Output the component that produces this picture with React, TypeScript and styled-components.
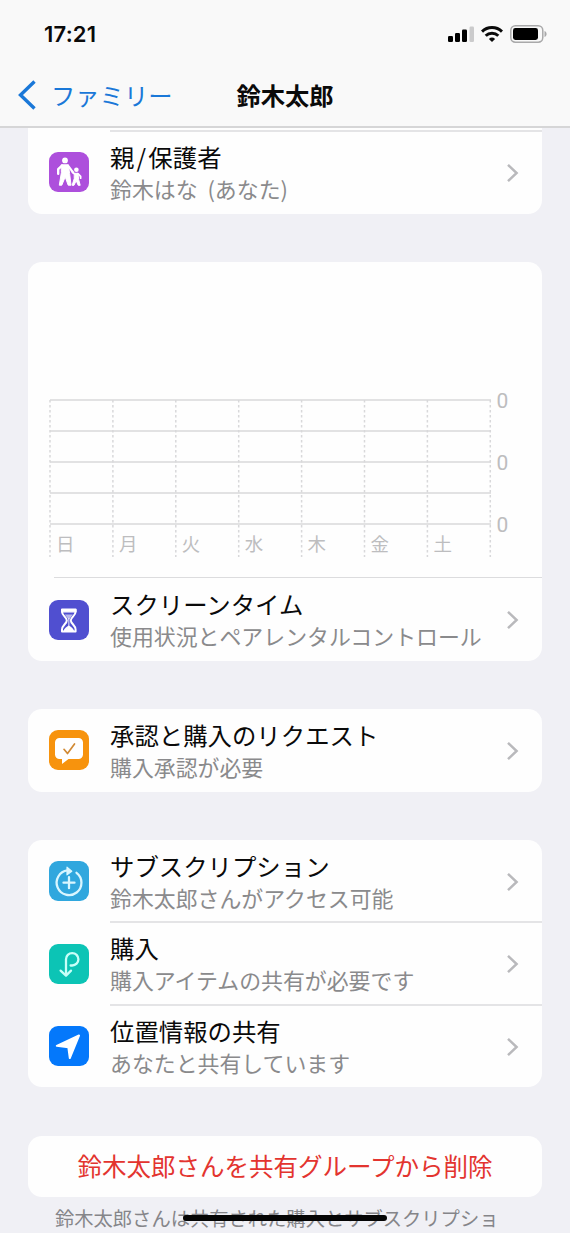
import React from 'react';
import styled, { createGlobalStyle } from 'styled-components';

const GlobalStyle = createGlobalStyle`
  * { box-sizing: border-box; }
  body {
    margin: 0;
    background: #f0f0f5;
    font-family: "Noto Sans CJK JP", sans-serif;
    color: #0a0a0a;
  }
`;

const Screen = styled.div`
  position: relative;
  width: 570px;
  height: 1233px;
  overflow: hidden;
  display: flex;
  flex-direction: column;
  background: #f0f0f5;
`;

const Header = styled.header`
  flex: none;
  height: 128px;
  background: #f9f9f9;
  border-bottom: 2px solid #d6d6d7;
`;

const StatusBar = styled.div`
  height: 66px;
  padding: 2px 23px 0 44px;
  display: flex;
  align-items: center;
  justify-content: space-between;
`;

const Clock = styled.span`
  font: 600 22px/30px Inter, sans-serif;
  letter-spacing: 0.2px;
`;

const StatusIcons = styled.div`
  display: flex;
  align-items: center;
  gap: 7px;
  svg { display: block; }
`;

const NavBar = styled.nav`
  height: 58px;
  display: grid;
  grid-template-columns: 1fr auto 1fr;
  align-items: center;
  padding: 0 18px;
`;

const BackLink = styled.div`
  display: flex;
  align-items: center;
  gap: 15px;
  color: #1a78d8;
  font-size: 24.3px;
  line-height: 36px;
`;

const NavTitle = styled.h1`
  margin: 0;
  font-size: 24.3px;
  line-height: 36px;
  font-weight: 700;
`;

const Content = styled.main`
  padding: 0 28px;
  display: flex;
  flex-direction: column;
`;

const Card = styled.section<{ $continued?: boolean }>`
  background: #fefefe;
  border-radius: ${(p) => (p.$continued ? '0 0 14px 14px' : '14px')};
  padding-top: ${(p) => (p.$continued ? '3px' : '0')};
  margin-bottom: 48.3px;
  overflow: hidden;
`;

const Row = styled.div`
  display: flex;
  align-items: center;
  height: 82.5px;
  padding-left: 21px;
`;

const IconTile = styled.div<{ $color: string }>`
  flex: none;
  width: 40px;
  height: 40px;
  border-radius: 9px;
  background: ${(p) => p.$color};
  svg { display: block; }
`;

const RowBody = styled.div<{ $divided?: boolean }>`
  flex: 1;
  height: 83.5px;
  margin: -1px 0 0 21px;
  padding-right: 23px;
  display: flex;
  align-items: center;
  justify-content: space-between;
  border-top: 2px solid ${(p) => (p.$divided ? '#e4e4e6' : 'transparent')};
`;

const Labels = styled.div`
  white-space: nowrap;
`;

const Title = styled.div`
  font-size: 24.4px;
  line-height: 32px;
`;

const Slash = styled.span`
  margin: 0 2.2px;
`;

const Subtitle = styled.div`
  font-size: 21.9px;
  line-height: 32px;
  color: #8a8a8c;
  word-spacing: 5px;
`;

const ChartArea = styled.div`
  height: 315px;
  padding-top: 125px;
  svg { display: block; }
`;

const Divider = styled.div`
  height: 1.5px;
  margin-left: 26px;
  background: #dcdcde;
`;

const DeleteButton = styled.button`
  width: 100%;
  height: 61px;
  border: 0;
  border-radius: 14px;
  padding: 0;
  background: #fefefe;
  color: #e3342f;
  font: 400 24.5px/36px "Noto Sans CJK JP", sans-serif;
  white-space: nowrap;
`;

const Footnote = styled.p`
  margin: 7px 0 0 27px;
  font-size: 19.3px;
  line-height: 28px;
  color: #858589;
  white-space: nowrap;
`;

const HomeIndicator = styled.div`
  position: absolute;
  left: 183px;
  bottom: 12px;
  width: 204px;
  height: 6px;
  border-radius: 3px;
  background: #050505;
`;

const Chevron = () => (
  <svg width="13" height="20" viewBox="0 0 13 20" fill="none">
    <path d="M2 1.8 10.6 10 2 18.2" stroke="#b9b9bc" strokeWidth="2.5" />
  </svg>
);

const Signal = () => (
  <svg width="26" height="16" viewBox="0 0 26 16">
    <rect x="0" y="10" width="5" height="6" rx="1.2" />
    <rect x="7" y="7" width="5" height="9" rx="1.2" />
    <rect x="14" y="3.5" width="5" height="12.5" rx="1.2" />
    <rect x="21.5" y="0.500" width="4.500" height="15.500" rx="1.2" fill="#cbcbcc" />
  </svg>
);

const Wifi = () => (
  <svg width="22" height="16" viewBox="0 0 22 16" fill="none" stroke="#0a0a0a" strokeWidth="3">
    <path d="M1 5.6a14.3 14.3 0 0 1 20 0" />
    <path d="M4.7 9.8a9 9 0 0 1 12.6 0" />
    <path d="M11 16 7.900 12.900a4.600 4.600 0 0 1 6.200 0Z" fill="#0a0a0a" stroke="none" />
  </svg>
);

const Battery = () => (
  <svg width="37" height="18" viewBox="0 0 37 18">
    <rect x="0.8" y="0.8" width="32" height="16.4" rx="4.6" fill="none" stroke="#a9a9aa" strokeWidth="1.5" />
    <rect x="3" y="3" width="25" height="12" rx="2.4" />
    <path d="M34.5 6v6c1.4-.5 2.1-1.6 2.1-3s-.7-2.5-2.1-3Z" fill="#a9a9aa" />
  </svg>
);

const FamilyGlyph = () => (
  <svg width="40" height="40" viewBox="0 0 40 40" fill="none" stroke="#fff" strokeLinecap="round" strokeLinejoin="round">
    <circle cx="16" cy="8.4" r="2.9" fill="#fff" stroke="none" />
    <path d="M12.6 12.8h6.8l1.2 8.700 1.400 11.700h-2.800L16.200 25l-3.400 8.200H10.300L12.300 21Z" fill="#fff" strokeWidth="1" />
    <path d="M13 13.6 9.200 17.200v4.500" strokeWidth="2.4" />
    <path d="m19 13.600 3.400 4.600 1.600 2" strokeWidth="2.2" />
    <circle cx="27.400" cy="17.800" r="2.300" fill="#fff" stroke="none" />
    <path d="M25.600 21.300h3.400l.6 6 1.600 6h-2l-2-4.600-2.200 4.600h-1.900l2-6.300Z" fill="#fff" strokeWidth="1" />
    <path d="m25.500 21.800-2-1.300m5.400 1.100 2.700 2.800v1.800" strokeWidth="1.800" />
  </svg>
);

const HourglassGlyph = () => (
  <svg width="40" height="40" viewBox="0 0 40 40" fill="none" stroke="#fff" strokeWidth="2" strokeLinejoin="round">
    <path d="M13 9.5h13.600v2.200c0 4-4.800 5.600-4.800 8.700s4.800 5 4.800 9.200v2H13v-2c0-4.200 4.800-6.100 4.800-9.200S13 15.700 13 11.700Z" />
    <path d="M12.700 9.500h14.200v2.300H12.700Z" fill="#fff" strokeWidth="1.200" />
    <path d="M15.800 14.600h8L19.800 20Z" fill="#fff" fillOpacity=".6" stroke="none" />
    <path d="M19.800 18v8" strokeWidth="1.500" strokeOpacity=".6" />
    <path d="M14.500 31c.6-2.800 3.200-4.300 5.300-5.600 2.100 1.300 4.700 2.800 5.300 5.600Z" fill="#fff" stroke="none" />
  </svg>
);

const RequestGlyph = () => (
  <svg width="40" height="40" viewBox="0 0 40 40" fill="none">
    <path d="M10.5 8h19a4.500 4.500 0 0 1 4.500 4.500v12a4.500 4.500 0 0 1-4.500 4.500H19.500L13 34v-5h-2.500A4.500 4.500 0 0 1 6 24.500v-12A4.500 4.500 0 0 1 10.500 8Z" fill="#fff" />
    <path d="m15 19.300 3.500 4.200L25.500 14" stroke="#d18a35" strokeWidth="1.700" strokeLinecap="round" strokeLinejoin="round" />
  </svg>
);

const SubscriptionGlyph = () => (
  <svg width="40" height="40" viewBox="0 0 40 40" fill="none" stroke="#d9f6ff" strokeWidth="2.300" strokeLinecap="round">
    <path d="M18.500 9.400A12.400 12.400 0 1 0 27.500 11.800" />
    <path d="M20 16.200v11M14.500 21.700h11" strokeWidth="2.300" />
    <path d="m18 6.200 4.800 4-4.800 3.600Z" fill="#d9f6ff" strokeWidth="1.200" strokeLinejoin="round" />
  </svg>
);

const PurchaseGlyph = () => (
  <svg width="40" height="40" viewBox="0 0 40 40" fill="none" stroke="#c8fff8" strokeWidth="2.300" strokeLinecap="round" strokeLinejoin="round">
    <path d="M17 31V15.300a6.200 6.200 0 1 1 6.200 6.200H21.600" />
    <path d="m11.600 26.600 5.400 5 5-5" />
  </svg>
);

const LocationGlyph = () => (
  <svg width="40" height="40" viewBox="0 0 40 40">
    <path d="M30 9.500 20.800 32l-1.500-10.800L7.800 19.800Z" fill="#fff" stroke="#fff" strokeWidth="2" strokeLinejoin="round" />
  </svg>
);

const DAYS = ['日', '月', '火', '水', '木', '金', '土'];
const COLUMN = 62.9;

const WeekChart = () => (
  <svg width="514" height="175" viewBox="0 0 514 175">
    {[0, 1, 2, 3, 4].map((i) => (
      <path key={i} d={`M22 ${13 + i * 31}H463`} stroke="#e2e2e3" strokeWidth="2" />
    ))}
    {[0, 1, 2, 3, 4, 5, 6, 7].map((i) => (
      <path key={i} d={`M${22 + i * COLUMN} 13V170`} stroke="#d8d8da" strokeWidth="1.5" strokeDasharray="2.5 2.5" />
    ))}
    {DAYS.map((day, i) => (
      <text key={day} x={28 + i * COLUMN} y="164" fontSize="18.5" fill="#bdbdbf">{day}</text>
    ))}
    {[0, 1, 2].map((i) => (
      <text key={i} x="468.5" y={20.5 + i * 62} fontSize="21" fontFamily="Roboto, sans-serif" fill="#bdbdbf">0</text>
    ))}
  </svg>
);

type ItemProps = {
  icon: React.ReactNode;
  color: string;
  title: React.ReactNode;
  subtitle: string;
  divided?: boolean;
};

const Item = ({ icon, color, title, subtitle, divided }: ItemProps) => (
  <Row>
    <IconTile $color={color}>{icon}</IconTile>
    <RowBody $divided={divided}>
      <Labels>
        <Title>{title}</Title>
        <Subtitle>{subtitle}</Subtitle>
      </Labels>
      <Chevron />
    </RowBody>
  </Row>
);

export default function App() {
  return (
    <>
      <GlobalStyle />
      <Screen lang="ja">
        <Header>
          <StatusBar>
            <Clock>17:21</Clock>
            <StatusIcons><Signal /><Wifi /><Battery /></StatusIcons>
          </StatusBar>
          <NavBar>
            <BackLink>
              <svg width="18" height="30" viewBox="0 0 18 30" fill="none">
                <path d="M16.5 1.5 2.5 15l14 13.5" stroke="#1a78d8" strokeWidth="3.4" />
              </svg>
              ファミリー
            </BackLink>
            <NavTitle>鈴木太郎</NavTitle>
          </NavBar>
        </Header>
        <Content>
          <Card $continued>
            <Item
              icon={<FamilyGlyph />}
              color="#ad4fdc"
              title={<>親<Slash>/</Slash>保護者</>}
              subtitle="鈴木はな (あなた)"
              divided
            />
          </Card>
          <Card>
            <ChartArea><WeekChart /></ChartArea>
            <Divider />
            <Item icon={<HourglassGlyph />} color="#504fd0" title="スクリーンタイム" subtitle="使用状況とペアレンタルコントロール" />
          </Card>
          <Card>
            <Item icon={<RequestGlyph />} color="#f7930d" title="承認と購入のリクエスト" subtitle="購入承認が必要" />
          </Card>
          <Card>
            <Item icon={<SubscriptionGlyph />} color="#30a7de" title="サブスクリプション" subtitle="鈴木太郎さんがアクセス可能" />
            <Item icon={<PurchaseGlyph />} color="#0cc4b5" title="購入" subtitle="購入アイテムの共有が必要です" divided />
            <Item icon={<LocationGlyph />} color="#0478fb" title="位置情報の共有" subtitle="あなたと共有しています" divided />
          </Card>
          <DeleteButton>鈴木太郎さんを共有グループから削除</DeleteButton>
          <Footnote>鈴木太郎さんは共有された購入とサブスクリプショ</Footnote>
        </Content>
        <HomeIndicator />
      </Screen>
    </>
  );
}
